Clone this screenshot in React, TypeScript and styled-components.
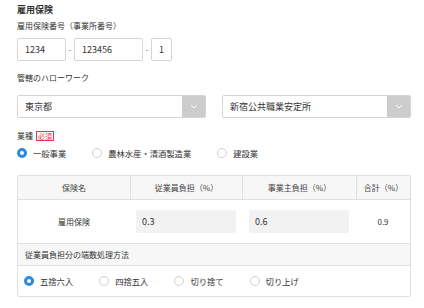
import React from 'react';
import styled, { createGlobalStyle } from 'styled-components';

const GlobalStyle = createGlobalStyle`
  body {
    margin: 0;
    background: #fff;
    font-family: "Noto Sans CJK JP", "Noto Sans", sans-serif;
    color: #333;
  }
`;

const Page = styled.div`
  width: 394px;
  padding: 4px 13px 0 17px;
`;

const Title = styled.div`
  font-size: 9px;
  font-weight: bold;
  line-height: 12px;
`;

const Label = styled.div<{ $mt: number }>`
  margin-top: ${(p) => p.$mt}px;
  font-size: 8px;
  line-height: 12px;
  display: flex;
  align-items: center;
  gap: 3px;
`;

const NumberRow = styled.div`
  margin-top: 6px;
  display: flex;
  align-items: center;
`;

const TextBox = styled.div<{ $w: number }>`
  box-sizing: border-box;
  width: ${(p) => p.$w}px;
  height: 23px;
  border: 1px solid #d4d4d4;
  border-radius: 2px;
  padding-left: 7px;
  font-size: 9px;
  display: flex;
  align-items: center;
`;

const Dash = styled.span`
  width: 8px;
  text-align: center;
  font-size: 8px;
  color: #666;
`;

const SelectRow = styled.div`
  margin-top: 11px;
  display: flex;
  justify-content: space-between;
`;

const Select = styled.div`
  box-sizing: border-box;
  width: 189px;
  height: 23px;
  border: 1px solid #d4d4d4;
  border-radius: 2px;
  display: flex;
  align-items: stretch;
  overflow: hidden;
`;

const SelectValue = styled.div`
  flex: 1;
  padding-left: 7px;
  font-size: 9px;
  display: flex;
  align-items: center;
`;

const Chevron = styled.div`
  width: 23px;
  background: #cccccc;
  display: flex;
  align-items: center;
  justify-content: center;
`;

const Badge = styled.span`
  box-sizing: border-box;
  height: 10px;
  padding: 0 1px;
  border: 1px solid #e8334a;
  color: #e8334a;
  font-size: 7px;
  line-height: 8px;
`;

const RadioGroup = styled.div<{ $mt?: number }>`
  margin-top: ${(p) => p.$mt ?? 0}px;
  display: flex;
  align-items: center;
  gap: 26px;
`;

const RadioItem = styled.label`
  display: flex;
  align-items: center;
  gap: 6px;
  font-size: 8.3px;
  line-height: 12px;
`;

const Dot = styled.span<{ $on?: boolean }>`
  box-sizing: border-box;
  width: 10px;
  height: 10px;
  border-radius: 50%;
  background: #fff;
  border: ${(p) => (p.$on ? '3px solid #2a8be0' : '1px solid #cfcfcf')};
`;

const Table = styled.div`
  margin-top: 16px;
  border: 1px solid #e0e0e0;
  border-radius: 2px;
`;

const Grid = styled.div`
  display: grid;
  grid-template-columns: 112px 112px 114px 1fr;
`;

const HeadCell = styled.div`
  height: 23px;
  background: #f7f7f7;
  border-bottom: 1px solid #e0e0e0;
  border-left: 1px solid #e0e0e0;
  font-size: 8px;
  color: #444;
  display: flex;
  align-items: center;
  justify-content: center;
  &:first-child {
    border-left: none;
  }
`;

const BodyCell = styled.div`
  height: 43px;
  border-bottom: 1px solid #e0e0e0;
  font-size: 8px;
  display: flex;
  align-items: center;
  justify-content: center;
  padding: 0 6px;
`;

const RateBox = styled.div`
  box-sizing: border-box;
  width: 100px;
  height: 23px;
  background: #f2f2f2;
  border-radius: 2px;
  padding-left: 6px;
  font-size: 9px;
  display: flex;
  align-items: center;
`;

const SubHead = styled.div`
  height: 21px;
  background: #f7f7f7;
  border-bottom: 1px solid #e0e0e0;
  padding-left: 7px;
  font-size: 8px;
  display: flex;
  align-items: center;
`;

const RoundingRow = styled.div`
  height: 30px;
  padding-left: 6px;
  display: flex;
  align-items: center;
`;

const ChevronIcon = () => (
  <svg width="8" height="5" viewBox="0 0 8 5">
    <path d="M1 1l3 3 3-3" fill="none" stroke="#fff" strokeWidth="1" />
  </svg>
);

const industries = ['一般事業', '農林水産・清酒製造業', '建設業'];
const roundings = ['五捨六入', '四捨五入', '切り捨て', '切り上げ'];

export default function App() {
  return (
    <>
      <GlobalStyle />
      <Page>
        <Title>雇用保険</Title>
        <Label $mt={4}>雇用保険番号（事業所番号）</Label>
        <NumberRow>
          <TextBox $w={49}>1234</TextBox>
          <Dash>-</Dash>
          <TextBox $w={69}>123456</TextBox>
          <Dash>-</Dash>
          <TextBox $w={21}>1</TextBox>
        </NumberRow>

        <Label $mt={11}>管轄のハローワーク</Label>
        <SelectRow>
          <Select>
            <SelectValue>東京都</SelectValue>
            <Chevron>
              <ChevronIcon />
            </Chevron>
          </Select>
          <Select>
            <SelectValue>新宿公共職業安定所</SelectValue>
            <Chevron>
              <ChevronIcon />
            </Chevron>
          </Select>
        </SelectRow>

        <Label $mt={12}>
          業種<Badge>必須</Badge>
        </Label>
        <RadioGroup $mt={5}>
          {industries.map((t, i) => (
            <RadioItem key={t}>
              <Dot $on={i === 0} />
              {t}
            </RadioItem>
          ))}
        </RadioGroup>

        <Table>
          <Grid>
            <HeadCell>保険名</HeadCell>
            <HeadCell>従業員負担（%）</HeadCell>
            <HeadCell>事業主負担（%）</HeadCell>
            <HeadCell>合計（%）</HeadCell>
            <BodyCell>雇用保険</BodyCell>
            <BodyCell>
              <RateBox>0.3</RateBox>
            </BodyCell>
            <BodyCell>
              <RateBox>0.6</RateBox>
            </BodyCell>
            <BodyCell>0.9</BodyCell>
          </Grid>
          <SubHead>従業員負担分の端数処理方法</SubHead>
          <RoundingRow>
            <RadioGroup>
              {roundings.map((t, i) => (
                <RadioItem key={t}>
                  <Dot $on={i === 0} />
                  {t}
                </RadioItem>
              ))}
            </RadioGroup>
          </RoundingRow>
        </Table>
      </Page>
    </>
  );
}
